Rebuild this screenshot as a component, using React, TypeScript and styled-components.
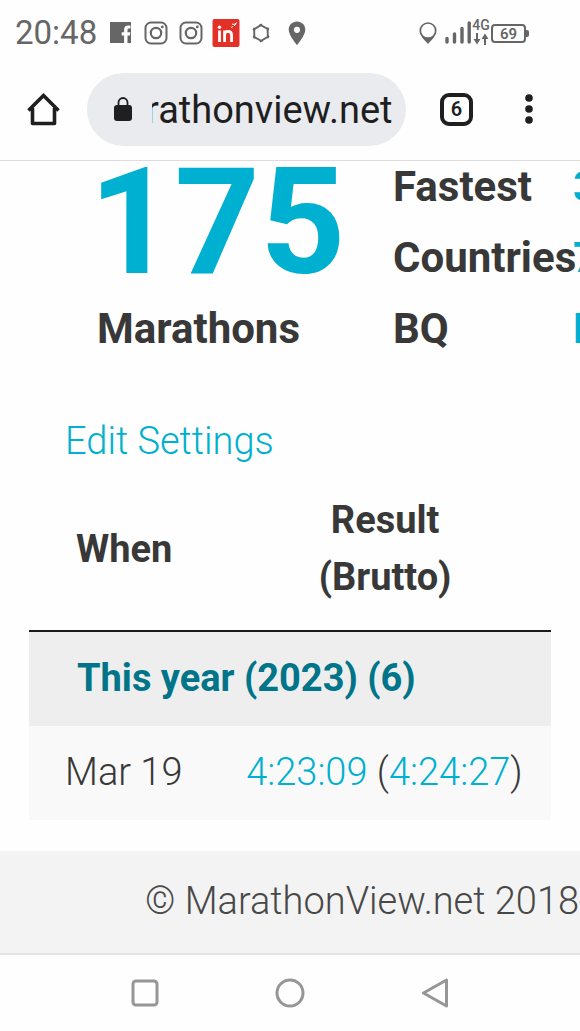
import React from "react";
import styled, { createGlobalStyle } from "styled-components";

const accent = "#00b0d0";
const ink = "#383838";
const chromeInk = "#1f1f1f";
const statusInk = "#666666";

const GlobalStyle = createGlobalStyle`
  *, *::before, *::after { box-sizing: border-box; }
  html { overflow-x: hidden; }
  body {
    margin: 0;
    background: #fefefe;
    color: ${ink};
    font-family: Roboto, "Liberation Sans", sans-serif;
    font-weight: 300;
    font-size: 38px;
    line-height: 57px;
  }
  a { color: ${accent}; text-decoration: none; }
  svg { display: block; flex: none; }
`;

const StatusBar = styled.header`
  display: flex;
  align-items: center;
  justify-content: space-between;
  height: 58px;
  padding: 8px 54px 0 15px;
  color: ${statusInk};
`;

const StatusGroup = styled.div<{ $gap: number }>`
  display: flex;
  align-items: center;
  gap: ${(p) => p.$gap}px;
`;

const Clock = styled.time`
  margin-right: 3px;
  font-size: 33px;
  line-height: 40px;
  font-weight: 400;
`;

const Network = styled.div`
  display: flex;
  flex-direction: column;
  align-items: center;
  width: 16px;
  margin-bottom: 3px;
  font-size: 14px;
  line-height: 15px;
  font-weight: 500;
`;

const Battery = styled.div`
  position: relative;
  width: 35px;
  height: 19px;
  border: 2px solid ${statusInk};
  border-radius: 4px;
  font-size: 15px;
  line-height: 16px;
  font-weight: 600;
  text-align: center;

  &::after {
    content: "";
    position: absolute;
    top: 4px;
    right: -5px;
    width: 3px;
    height: 7px;
    border-radius: 0 2px 2px 0;
    background: ${statusInk};
  }
`;

const Toolbar = styled.nav`
  display: flex;
  align-items: center;
  height: 103px;
  padding: 0 39px 0 27px;
  border-bottom: 1px solid #dcdcdc;
  color: ${chromeInk};
`;

const IconButton = styled.button`
  display: grid;
  place-items: center;
  flex: none;
  padding: 0;
  border: 0;
  background: none;
  color: inherit;
  font-family: inherit;
`;

const TabsButton = styled(IconButton)`
  width: 33px;
  height: 33px;
  margin: 0 44px 0 34px;
  border: 4px solid ${chromeInk};
  border-radius: 9px;
  font-size: 20px;
  line-height: 24px;
  font-weight: 600;
`;

const AddressPill = styled.label`
  display: flex;
  align-items: center;
  flex: 1;
  min-width: 0;
  height: 73px;
  margin-left: 27px;
  padding: 0 12px 0 26px;
  border-radius: 37px;
  background: #eaebef;
`;

const AddressInput = styled.input`
  flex: 1;
  min-width: 0;
  height: 57px;
  margin-left: 19px;
  padding: 2px 0 0;
  border: 0;
  outline: 0;
  background: none;
  color: ${chromeInk};
  font-family: inherit;
  font-size: 38px;
  font-weight: 400;
  text-indent: -6px;
`;

const Page = styled.main`
  overflow: hidden;
`;

const Stats = styled.section`
  display: flex;
  margin-top: -10px;
  padding-left: 89px;
  font-size: 42px;
  line-height: 71px;
  font-weight: 700;
  white-space: nowrap;
`;

const Total = styled.div`
  flex: none;
  width: 304px;
`;

const TotalNumber = styled.div`
  color: ${accent};
  font-size: 149px;
  line-height: 142px;
`;

const TotalLabel = styled.div`
  padding-left: 8px;
`;

const StatList = styled.dl`
  display: grid;
  grid-template-columns: 180px auto;
  flex: none;
  margin: 0;
`;

const StatName = styled.dt`
  margin: 0;
`;

const StatValue = styled.dd`
  margin: 0;
  color: ${accent};
`;

const SettingsLink = styled.a`
  display: block;
  width: fit-content;
  margin: 49px 0 0 65px;
`;

const Results = styled.table`
  width: calc(100% - 58px);
  margin: 0 29px 31px;
  border-collapse: collapse;
`;

const HeadCell = styled.th`
  padding: 22px 27px 24px 36px;
  border-bottom: 2px solid #1a1a1a;
  font-weight: 700;
`;

const YearCell = styled.th`
  padding: 18px 27px 19px 48px;
  background: #eeeeee;
  color: #007489;
  font-weight: 700;
  text-align: left;
`;

const Cell = styled.td`
  padding: 18px 27px 19px 36px;
  background: #f9f9f9;
  white-space: nowrap;
`;

const Footer = styled.footer`
  overflow: hidden;
  padding: 22px 0 23px 145px;
  border-bottom: 2px solid #e2e5e5;
  background: #f3f3f3;
  color: #484848;
  white-space: nowrap;
`;

const SystemNav = styled.nav`
  display: grid;
  grid-template-columns: repeat(3, 1fr);
  align-items: center;
  justify-items: center;
  height: 76px;
  padding: 0 12.5%;
  color: #969696;
`;

const FacebookIcon = () => (
  <svg width="28" height="28" viewBox="0 0 28 28">
    <path
      fill="currentColor"
      d="M3 3h21v21h-3.500v-7.500h2.400l.4-3.300h-2.800v-2.200c0-1 .4-1.500 1.500-1.500h1.400V6.500h-2.400c-2.600 0-3.900 1.500-3.900 4v2.700h-2.400v3.300h2.400V24H3z"
    />
  </svg>
);

const InstagramIcon = () => (
  <svg width="28" height="28" viewBox="0 0 28 28" fill="none" stroke="currentColor" strokeWidth="2">
    <rect x="3.500" y="3.500" width="21" height="21" rx="5.500" />
    <circle cx="14" cy="14" r="5.200" strokeWidth="2.200" />
    <circle cx="20.300" cy="7.900" r="1.400" fill="currentColor" stroke="none" />
  </svg>
);

const NewsIcon = () => (
  <svg width="28" height="28" viewBox="0 0 28 28">
    <rect x="0.500" y="0" width="27" height="28" rx="2" fill="#e33127" />
    <g fill="none" stroke="#fff" strokeWidth="2.800">
      <path d="M7.500 11.500V23M12.600 23V11.500M12.600 16c0-2.500 1.400-3.700 3.500-3.700 2.300 0 3.500 1.300 3.500 3.900V23" />
      <path d="M19 8.500l2-1M20 5l2 .5 3-2M22 7l2-2" strokeWidth="1" />
    </g>
    <circle cx="7.500" cy="8.300" r="1.700" fill="#fff" />
  </svg>
);

const HexagonIcon = () => (
  <svg width="28" height="28" viewBox="0 0 28 28" fill="none" stroke="currentColor" strokeWidth="1.900">
    {[0, 60, 120, 180, 240, 300].map((angle) => (
      <path key={angle} d="M12.500 5.500l9.500 5.200" transform={`rotate(${angle} 14 14)`} />
    ))}
  </svg>
);

const PinIcon = () => (
  <svg width="28" height="28" viewBox="0 0 28 28">
    <path
      fill="currentColor"
      fillRule="evenodd"
      d="M15 2.500c-4.700 0-8.300 3.600-8.300 8.200C6.700 16.500 15 26 15 26s8.300-9.500 8.300-15.300c0-4.600-3.600-8.200-8.300-8.200zm0 5.200a3.100 3.100 0 1 1 0 6.200 3.100 3.100 0 0 1 0-6.200z"
    />
  </svg>
);

const LocationIcon = () => (
  <svg width="22" height="24" viewBox="0 0 22 24">
    <circle cx="9" cy="9.700" r="7.700" fill="none" stroke="currentColor" strokeWidth="1.700" />
    <path d="M2 14c2 2 4.500 2.500 7 2.500s5-.5 7-2.500c-1.500 4-5 6-7 9-2-3-5.500-5-7-9z" fill="currentColor" />
  </svg>
);

const SignalIcon = () => (
  <svg width="28" height="24" viewBox="0 0 28 24" stroke="currentColor" strokeWidth="3.400" strokeLinecap="round">
    <path d="M4 17.500v3.500M11.500 13v8M19 7.500V21M26.200 2v19" />
  </svg>
);

const DataArrowsIcon = () => (
  <svg width="16" height="12" viewBox="0 0 16 12">
    <path
      fill="currentColor"
      d="M3 0h2v6h2.500L4 11.500.5 6H3zM11 12h2V6h2.500L12 .5 8.500 6H11z"
    />
  </svg>
);

const HomeIcon = () => (
  <svg width="33" height="33" viewBox="0 0 33 33" fill="none" stroke="currentColor" strokeWidth="3.600" strokeLinejoin="round">
    <path d="M1.500 17.500L16.500 2.500l15 15" strokeLinejoin="miter" />
    <path d="M5.500 15v15.500h22V15" />
  </svg>
);

const LockIcon = () => (
  <svg width="20" height="26" viewBox="0 0 20 26">
    <rect x="1" y="9" width="18" height="16" rx="3" fill="currentColor" />
    <path d="M5.500 10V6.500a4.500 4.500 0 0 1 9 0V10" fill="none" stroke="currentColor" strokeWidth="1.800" />
  </svg>
);

const MoreIcon = () => (
  <svg width="24" height="32" viewBox="0 0 24 32" fill="currentColor">
    <circle cx="12" cy="5" r="3.800" />
    <circle cx="12" cy="16" r="3.800" />
    <circle cx="12" cy="27" r="3.800" />
  </svg>
);

const NavIcon = ({ children }: { children: React.ReactNode }) => (
  <svg width="30" height="30" viewBox="0 0 30 30" fill="none" stroke="currentColor" strokeWidth="3" strokeLinejoin="round">
    {children}
  </svg>
);

const stats = [
  { name: "Fastest", value: "3" },
  { name: "Countries", value: "7" },
  { name: "BQ", value: "N" },
];

export default function App() {
  return (
    <>
      <GlobalStyle />
      <StatusBar>
        <StatusGroup $gap={7}>
          <Clock>20:48</Clock>
          <FacebookIcon />
          <InstagramIcon />
          <InstagramIcon />
          <NewsIcon />
          <HexagonIcon />
          <PinIcon />
        </StatusGroup>
        <StatusGroup $gap={2}>
          <LocationIcon />
          <SignalIcon />
          <Network>
            4G
            <DataArrowsIcon />
          </Network>
          <Battery>69</Battery>
        </StatusGroup>
      </StatusBar>

      <Toolbar aria-label="Browser">
        <IconButton aria-label="Home">
          <HomeIcon />
        </IconButton>
        <AddressPill>
          <LockIcon />
          <AddressInput type="text" aria-label="Address" defaultValue="rathonview.net" />
        </AddressPill>
        <TabsButton aria-label="Open tabs">6</TabsButton>
        <IconButton aria-label="Menu">
          <MoreIcon />
        </IconButton>
      </Toolbar>

      <Page>
        <Stats>
          <Total>
            <TotalNumber>175</TotalNumber>
            <TotalLabel>Marathons</TotalLabel>
          </Total>
          <StatList>
            {stats.map((s) => (
              <React.Fragment key={s.name}>
                <StatName>{s.name}</StatName>
                <StatValue>{s.value}</StatValue>
              </React.Fragment>
            ))}
          </StatList>
        </Stats>

        <SettingsLink href="#settings">Edit Settings</SettingsLink>

        <Results>
          <thead>
            <tr>
              <HeadCell scope="col">When</HeadCell>
              <HeadCell scope="col">
                Result
                <br />
                (Brutto)
              </HeadCell>
            </tr>
          </thead>
          <tbody>
            <tr>
              <YearCell colSpan={2}>This year (2023) (6)</YearCell>
            </tr>
            <tr>
              <Cell>Mar 19</Cell>
              <Cell>
                <a href="#netto">4:23:09</a> (<a href="#brutto">4:24:27</a>)
              </Cell>
            </tr>
          </tbody>
        </Results>
      </Page>

      <Footer>© MarathonView.net 2018-</Footer>

      <SystemNav aria-label="System">
        <IconButton aria-label="Recent apps">
          <NavIcon>
            <rect x="3" y="3" width="24" height="24" rx="3" />
          </NavIcon>
        </IconButton>
        <IconButton aria-label="Home screen">
          <NavIcon>
            <circle cx="15" cy="15" r="13" />
          </NavIcon>
        </IconButton>
        <IconButton aria-label="Back">
          <NavIcon>
            <path d="M3.500 15L26.500 2v26z" />
          </NavIcon>
        </IconButton>
      </SystemNav>
    </>
  );
}
